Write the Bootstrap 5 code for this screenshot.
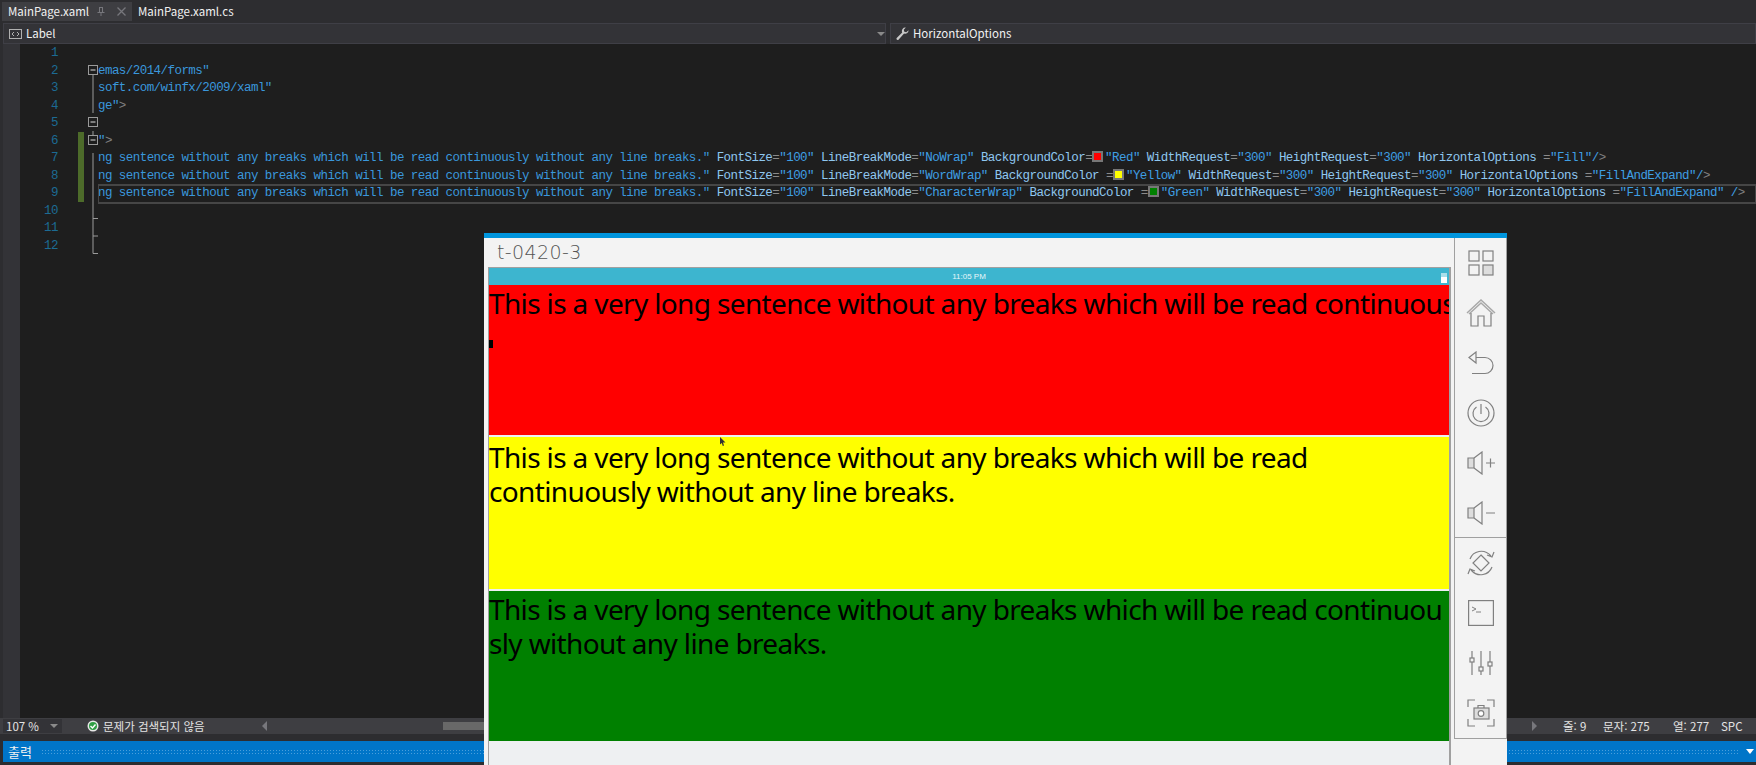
<!DOCTYPE html>
<html lang="ko">
<head>
<meta charset="utf-8">
<title>MainPage.xaml</title>
<link href="https://cdn.jsdelivr.net/npm/bootstrap@5.3.0/dist/css/bootstrap.min.css" rel="stylesheet">
<style>
html,body{height:765px;overflow:hidden;background:#2d2d30;}
body{font-family:"Noto Sans CJK KR","Noto Sans",sans-serif;font-size:11.5px;color:#f1f1f1;}
.vs-shell{width:1756px;height:765px;}
.tab-row{height:23px;padding:2px 0 0 2px;}
.tab-on{width:130px;height:19px;background:#3e3e42;padding-left:6px;line-height:19px;}
.tab-off{margin-left:6px;line-height:19px;}
.tab-tools{gap:12px;margin-right:6px;}
.bar-row{height:21px;padding-left:3px;gap:4px;}
.combo{background:#333337;border:1px solid #3f3f46;height:21px;line-height:19px;padding-left:5px;}
.combo-a{width:883px;}
.combo-b{flex:1 1 auto;padding-left:5px;}
.caret-d{width:0;height:0;border-left:4px solid transparent;border-right:4px solid transparent;border-top:4px solid #8a8a8a;}
.editor-wrap{height:674px;padding-left:3px;}
.margin-col{width:17px;background:#333337;}
.editor{background:#1e1e1e;padding-top:1px;}
.mono{font-family:"Liberation Mono",monospace;font-size:12.5px;letter-spacing:-.55px;line-height:17.5px;}
.nums{width:38px;text-align:right;color:#1c6b94;white-space:pre;}
.change-col{width:8px;margin-left:20px;padding-top:87px;}
.change-bar{width:6px;height:70px;background:#4d6b2a;}
.fold-col{width:12px;margin-left:1px;flex:none;}
.code{color:#3a97dc;flex:1 1 auto;overflow:hidden;margin-left:-1px;}
.code-line{height:17.5px;white-space:pre;}
.line-hl{outline:2px solid #464646;outline-offset:-1px;}
.a{color:#8fc7f0;}.e{color:#8a8a8a;}.v{color:#3f9fe3;}.g{color:#808080;}
.sw{display:inline-block;width:11px;height:11px;border:2px solid #777;vertical-align:-1px;margin-right:2px;}
.sw-r{background:#f00;}.sw-y{background:#ff0;}.sw-g{background:#008000;}
.status-row{height:16px;background:#3e3e42;font-size:11.5px;line-height:16px;color:#e4e4e4;white-space:nowrap;}
.zoom-box{width:59px;height:14px;margin:1px 0 0 3px;background:#333337;line-height:13px;padding-left:3px;}
.ok-area{margin-left:25px;gap:4px;width:125px;}
.arr-l{width:0;height:0;border-top:5px solid transparent;border-bottom:5px solid transparent;border-right:5px solid #77777c;margin-left:50px;margin-top:3px;}
.thumb{width:1040px;height:8px;background:#686868;margin:4px 0 0 176px;}
.arr-r{width:0;height:0;border-top:5px solid transparent;border-bottom:5px solid transparent;border-left:5px solid #77777c;margin:3px 0 0 auto;}
.cell-a{margin-left:26px;width:40px;}.cell-b{width:70px;}.cell-c{width:48px;}.cell-d{width:35px;}
.panel{height:21px;margin:7px 0 0 3px;background:#0075c8;line-height:20px;padding:0 2px 0 5px;font-size:13px;}
.dots{height:6px;margin:0 7px 0 9px;background-image:radial-gradient(#4a9fdc 0.6px,transparent .8px);background-size:3px 3px;}
.caret-w{width:0;height:0;border-left:4px solid transparent;border-right:4px solid transparent;border-top:5px solid #fff;}
.emu{left:484px;top:233px;width:1023px;height:532px;background:#f3f3f3;border-top:5px solid #0095dd;}
.emu-title{height:29px;padding-left:13px;font-family:"DejaVu Sans",sans-serif;font-weight:200;font-size:19px;letter-spacing:.4px;line-height:28px;color:#555;}
.emu-main{width:970px;height:498px;}
.screen{width:963px;margin-left:4px;background:#eef0f2;border-left:1px solid #a0a0a0;border-right:2px solid #a0a0a0;border-top:1px solid #a0a0a0;height:498px;}
.phone-bar{height:17px;background:#3db5cf;color:#e8f6f9;font-size:8px;line-height:17px;font-family:"Liberation Sans",sans-serif;}
.batt{right:2px;top:5px;width:6px;height:10px;background:linear-gradient(#a9dfea 40%,#fff 40%);}
.label-box{font-family:"Noto Sans",sans-serif;font-size:28px;letter-spacing:-.64px;line-height:34px;color:#000;overflow:hidden;}
.lb-red{height:150px;background:#f00;white-space:nowrap;padding-top:1px;margin-bottom:2px;}
.lb-yel{height:152px;background:#ff0;padding-top:3px;margin-bottom:2px;}
.lb-grn{height:150px;background:#008000;word-break:break-all;padding-top:1px;}
.caret-mark{left:0;top:72px;width:4px;height:8px;background:#000;}
.ptr{left:231px;top:169px;}
.side{top:0;left:970px;width:53px;height:501px;border-left:1px solid #a0a0a0;border-right:1px solid #a0a0a0;border-bottom:1px solid #a0a0a0;background:#f3f3f3;}
.slot{height:50px;}
.slot svg{fill:none;stroke:#808080;stroke-width:1.2;}
.slot-split{border-bottom:1px solid #a0a0a0;}
</style>
</head>
<body>
<div class="vs-shell d-flex flex-column position-relative">
  <div class="tab-row d-flex">
    <div class="tab-on d-flex justify-content-between align-items-center"><span>MainPage.xaml</span>
      <span class="tab-tools d-flex align-items-center">
        <svg width="8" height="9" viewBox="0 0 8 9" fill="none" stroke="#77777c"><path d="M2 .5H6M2.500 .5V5M5.500 .5V5M.5 5.500H7.500M4 5.500V9"/></svg>
        <svg width="9" height="9" viewBox="0 0 9 9" fill="none" stroke="#77777c" stroke-width="1.300"><path d="M.5 .5L8.500 8.500M8.500 .5L.5 8.500"/></svg>
      </span>
    </div>
    <div class="tab-off">MainPage.xaml.cs</div>
  </div>
  <div class="bar-row d-flex">
    <div class="combo combo-a d-flex align-items-center">
      <svg width="13" height="10" viewBox="0 0 13 10" fill="none" stroke="#b0b0b0"><rect x=".5" y=".5" width="12" height="9"/><path d="M5 3L3 5l2 2M8 3l2 2-2 2"/></svg>
      <span class="ms-1 flex-grow-1">Label</span>
      <span class="caret-d me-0"></span>
    </div>
    <div class="combo combo-b d-flex align-items-center">
      <svg width="13" height="13" viewBox="0 0 13 13" fill="#c8c8c8"><path d="M12.5 3.2a3.3 3.3 0 0 1-4.4 3.4L2.7 12.4a1.2 1.2 0 0 1-2-1.4l5.5-5.6A3.4 3.4 0 0 1 9.8.6L7.8 2.7l.5 2 2 .5z"/></svg>
      <span class="ms-1">HorizontalOptions</span>
    </div>
  </div>
  <div class="editor-wrap d-flex">
    <div class="margin-col"></div>
    <div class="editor d-flex flex-grow-1">
      <div class="nums mono">1
2
3
4
5
6
7
8
9
10
11
12</div>
      <div class="change-col"><div class="change-bar"></div></div>
      <svg class="fold-col" width="12" height="215" viewBox="0 0 12 215" fill="none" stroke="#9a9a9a">
        <path d="M6 30V68M6 86V90M6 108V208.500H11M6 173.500H11M6 191H11"/>
        <rect x="1.500" y="20.500" width="9" height="9"/><path d="M3.500 25H8.500" stroke="#ddd"/>
        <rect x="1.500" y="72.500" width="9" height="9"/><path d="M3.500 77H8.500" stroke="#ddd"/>
        <rect x="1.500" y="90.500" width="9" height="9"/><path d="M3.500 95H8.500" stroke="#ddd"/>
      </svg>
      <div class="code mono">
        <div class="code-line"></div>
        <div class="code-line">emas/2014/forms"</div>
        <div class="code-line">soft.com/winfx/2009/xaml"</div>
        <div class="code-line">ge"<span class="g">&gt;</span></div>
        <div class="code-line"></div>
        <div class="code-line">"<span class="g">&gt;</span></div>
        <div class="code-line">ng sentence without any breaks which will be read continuously without any line breaks." <span class="a">FontSize</span><span class="e">=</span><span class="v">"100"</span> <span class="a">LineBreakMode</span><span class="e">=</span><span class="v">"NoWrap"</span> <span class="a">BackgroundColor</span><span class="e">=</span><span class="sw sw-r"></span><span class="v">"Red"</span> <span class="a">WidthRequest</span><span class="e">=</span><span class="v">"300"</span> <span class="a">HeightRequest</span><span class="e">=</span><span class="v">"300"</span> <span class="a">HorizontalOptions</span> <span class="e">=</span><span class="v">"Fill"/</span><span class="g">&gt;</span></div>
        <div class="code-line">ng sentence without any breaks which will be read continuously without any line breaks." <span class="a">FontSize</span><span class="e">=</span><span class="v">"100"</span> <span class="a">LineBreakMode</span><span class="e">=</span><span class="v">"WordWrap"</span> <span class="a">BackgroundColor</span> <span class="e">=</span><span class="sw sw-y"></span><span class="v">"Yellow"</span> <span class="a">WidthRequest</span><span class="e">=</span><span class="v">"300"</span> <span class="a">HeightRequest</span><span class="e">=</span><span class="v">"300"</span> <span class="a">HorizontalOptions</span> <span class="e">=</span><span class="v">"FillAndExpand"/</span><span class="g">&gt;</span></div>
        <div class="code-line line-hl">ng sentence without any breaks which will be read continuously without any line breaks." <span class="a">FontSize</span><span class="e">=</span><span class="v">"100"</span> <span class="a">LineBreakMode</span><span class="e">=</span><span class="v">"CharacterWrap"</span> <span class="a">BackgroundColor</span> <span class="e">=</span><span class="sw sw-g"></span><span class="v">"Green"</span> <span class="a">WidthRequest</span><span class="e">=</span><span class="v">"300"</span> <span class="a">HeightRequest</span><span class="e">=</span><span class="v">"300"</span> <span class="a">HorizontalOptions</span> <span class="e">=</span><span class="v">"FillAndExpand"</span> <span class="v">/</span><span class="g">&gt;</span></div>
      </div>
    </div>
  </div>
  <div class="status-row d-flex">
    <div class="zoom-box d-flex justify-content-between align-items-center pe-1"><span>107 %</span><span class="caret-d"></span></div>
    <div class="ok-area d-flex align-items-center">
      <svg width="12" height="12" viewBox="0 0 12 12"><circle cx="6" cy="6" r="5.500" fill="#e8e8e8"/><circle cx="6" cy="6" r="4" fill="#2f9e44"/><path d="M3.500 6l2 2 3-3.500" fill="none" stroke="#fff" stroke-width="1.400"/></svg>
      <span>문제가 검색되지 않음</span>
    </div>
    <div class="arr-l"></div>
    <div class="thumb"></div>
    <div class="arr-r"></div>
    <div class="cell-a">줄: 9</div>
    <div class="cell-b">문자: 275</div>
    <div class="cell-c">열: 277</div>
    <div class="cell-d">SPC</div>
  </div>
  <div class="panel d-flex align-items-center">
    <span>출력</span>
    <div class="dots flex-grow-1"></div>
    <span class="caret-w"></span>
  </div>

  <div class="emu position-absolute">
    <div class="emu-main">
      <div class="emu-title">t-0420-3</div>
      <div class="screen position-relative">
        <div class="phone-bar text-center position-relative">11:05 PM<span class="batt position-absolute"></span></div>
        <div class="label-box lb-red">This is a very long sentence without any breaks which will be read continuously without any line breaks.</div>
        <div class="label-box lb-yel">This is a very long sentence without any breaks which will be read continuously without any line breaks.</div>
        <div class="label-box lb-grn">This is a very long sentence without any breaks which will be read continuously without any line breaks.</div>
        <span class="caret-mark position-absolute"></span>
        <svg class="ptr position-absolute" width="6" height="9" viewBox="0 0 6 9"><path d="M0 0L5.500 5.500H3L4 8.500 2.800 9 1.800 6 0 7.500z" fill="#333"/></svg>
      </div>
    </div>
    <div class="side position-absolute d-flex flex-column">
      <div class="slot d-flex align-items-center justify-content-center"><svg width="26" height="26" viewBox="0 0 26 26"><rect x="1" y="1" width="10" height="10"/><rect x="15" y="1" width="10" height="10"/><rect x="1" y="15" width="10" height="10"/><rect x="15" y="15" width="10" height="10" fill="#ddd"/></svg></div>
      <div class="slot d-flex align-items-center justify-content-center"><svg width="30" height="28" viewBox="0 0 30 28"><path d="M1 14L15 1l14 13M3 15L15 4l12 11" stroke="#a8a8a8" stroke-width="1.500"/><path d="M5 14V27H12V17H18V27H25V14"/></svg></div>
      <div class="slot d-flex align-items-center justify-content-center"><svg width="26" height="24" viewBox="0 0 26 24"><path d="M1 6.500L8 1V12zM8 6.500H17a7.500 7.500 0 0 1 0 16H4"/></svg></div>
      <div class="slot d-flex align-items-center justify-content-center"><svg width="28" height="28" viewBox="0 0 28 28"><circle cx="14" cy="14" r="13"/><path d="M9.500 8a8 8 0 1 0 9 0M14 5V15"/></svg></div>
      <div class="slot d-flex align-items-center justify-content-center"><svg width="28" height="24" viewBox="0 0 28 24"><path d="M1 7H7V17H1z" fill="#ddd"/><path d="M7 7L15 1V23L7 17M19 12H28M23.500 7.500V16.500"/></svg></div>
      <div class="slot slot-split d-flex align-items-center justify-content-center"><svg width="28" height="24" viewBox="0 0 28 24"><path d="M1 7H7V17H1z" fill="#ddd"/><path d="M7 7L15 1V23L7 17M19 12H28"/></svg></div>
      <div class="slot d-flex align-items-center justify-content-center"><svg width="28" height="28" viewBox="0 0 28 28"><path d="M14 6L22 14 14 22 6 14z"/><path d="M3 10C6 2 17-1 24 7M27 3L25 8 20 6M25 18C22 26 11 29 4 21M1 25L3 20 8 22"/></svg></div>
      <div class="slot d-flex align-items-center justify-content-center"><svg width="26" height="26" viewBox="0 0 26 26"><rect x=".6" y=".6" width="24.800" height="24.800"/><path d="M4 7L8 9 4 11M8 12H13" stroke-width="1"/></svg></div>
      <div class="slot d-flex align-items-center justify-content-center"><svg width="26" height="26" viewBox="0 0 26 26"><path d="M4 1V8M4 12V25M13 1V17M13 21V25M22 1V12M22 16V25"/><rect x="2" y="8" width="4" height="4"/><rect x="11" y="17" width="4" height="4"/><rect x="20" y="12" width="4" height="4"/></svg></div>
      <div class="slot d-flex align-items-center justify-content-center"><svg width="28" height="28" viewBox="0 0 28 28"><path d="M8 1H1V8M20 1H27V8M1 20V27H8M27 20V27H20"/><rect x="7" y="9" width="15" height="11" fill="#ddd"/><path d="M11 9V6.500H17V9"/><circle cx="14" cy="14.500" r="2.800" fill="#fff"/></svg></div>
    </div>
  </div>
</div>
</body>
</html>
